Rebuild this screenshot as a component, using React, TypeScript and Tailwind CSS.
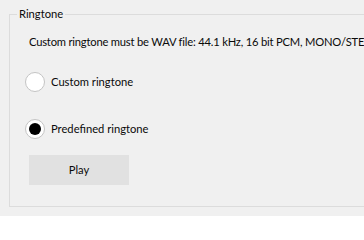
import { useState } from "react";

function Radio({ checked, label, onClick }: { checked: boolean; label: string; onClick: () => void }) {
  return (
    <button type="button" onClick={onClick} className="flex items-center gap-[6px] h-[20px]">
      <span className="w-[20px] h-[20px] rounded-full border border-[#c4c4c4] bg-white flex items-center justify-center">
        {checked && <span className="w-[12px] h-[12px] rounded-full bg-black" />}
      </span>
      <span>{label}</span>
    </button>
  );
}

export default function App() {
  const [choice, setChoice] = useState<"custom" | "predefined">("predefined");

  return (
    <div
      className="h-[216px] w-full overflow-hidden bg-[#f0f0f0] text-[11.2px] leading-[16px] text-[#0a0a0a]"
      style={{ fontFamily: 'Lato, "Liberation Sans", Arial, sans-serif' }}
    >
      <fieldset className="ml-[9px] mt-[6px] w-[420px] h-[201px] border border-[#dcdcdc] pl-[7px]">
        <legend className="px-[2px]">Ringtone</legend>

        {/* group content */}
        <div className="flex flex-col items-start pl-[12px]">
          <p className="mt-[12px] whitespace-nowrap tracking-[-0.2px]">
            Custom ringtone must be WAV file: 44.1 kHz, 16 bit PCM, MONO/STEREO
          </p>

          <div className="mt-[22px] -ml-[4px]">
            <Radio checked={choice === "custom"} label="Custom ringtone" onClick={() => setChoice("custom")} />
          </div>
          <div className="mt-[27px] -ml-[4px]">
            <Radio
              checked={choice === "predefined"}
              label="Predefined ringtone"
              onClick={() => setChoice("predefined")}
            />
          </div>

          <button type="button" className="mt-[16px] w-[100px] h-[30px] bg-[#e1e1e1]">
            Play
          </button>
        </div>
      </fieldset>
    </div>
  );
}
